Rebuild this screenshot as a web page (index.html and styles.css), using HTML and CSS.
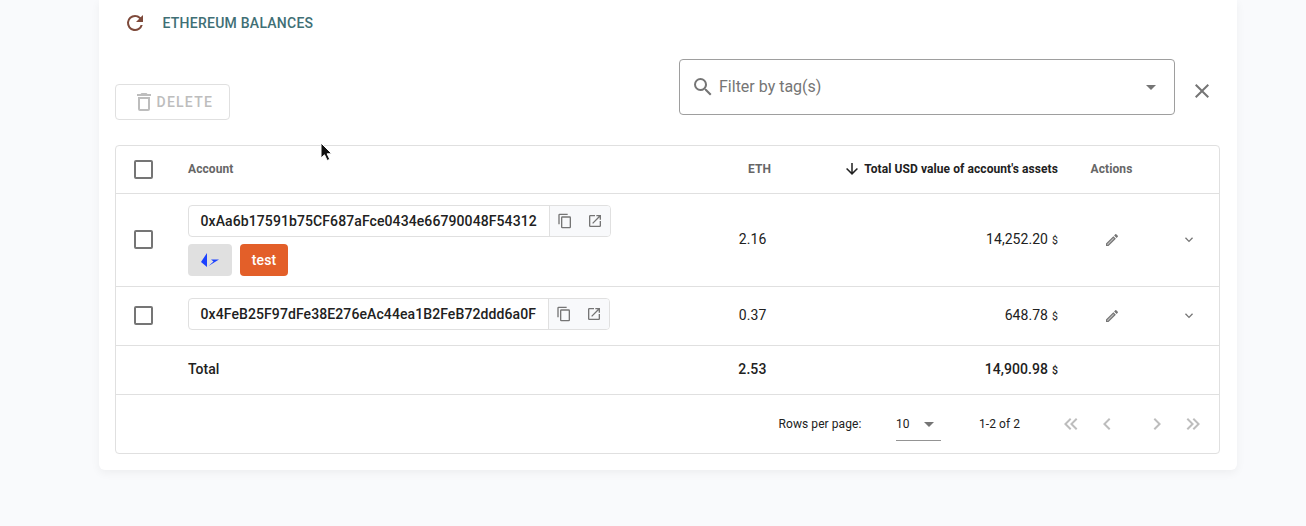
FILE: index.html
```html
<!DOCTYPE html>
<html lang="en">
<head>
<meta charset="utf-8">
<title>Ethereum Balances</title>
<link rel="stylesheet" href="styles.css">
</head>
<body>
<main class="card">
  <header class="title">
    <svg class="icon refresh" width="24" height="24" viewBox="0 0 24 24"><path d="M17.65 6.35A7.96 7.96 0 0 0 12 4a8 8 0 1 0 7.73 10h-2.08A6 6 0 1 1 12 6c1.66 0 3.14.69 4.22 1.78L13 11h7V4z"/></svg>
    <h1 class="heading">ETHEREUM BALANCES</h1>
  </header>
  <div class="toolbar">
    <button class="delete">
      <svg class="icon" width="24" height="24" viewBox="0 0 24 24"><path d="M6 19a2 2 0 0 0 2 2h8a2 2 0 0 0 2-2V7H6v12M8 9h8v10H8V9m7.5-5-1-1h-5l-1 1H5v2h14V4h-3.500z"/></svg>
      <span class="delete-label">DELETE</span>
    </button>
    <div class="filter">
      <svg class="icon gray" width="24" height="24" viewBox="0 0 24 24"><path d="M9.500 3A6.500 6.500 0 0 1 16 9.500c0 1.610-.59 3.090-1.560 4.230l.27.27h.79l5 5-1.500 1.500-5-5v-.79l-.27-.27A6.516 6.516 0 0 1 9.500 16a6.500 6.500 0 0 1 0-13m0 2a4.500 4.500 0 1 0 0 9 4.500 4.500 0 0 0 0-9z"/></svg>
      <span class="filter-text">Filter by tag(s)</span>
      <svg class="icon gray" width="24" height="24" viewBox="0 0 24 24"><path d="M7 10l5 5 5-5z"/></svg>
    </div>
    <svg class="icon gray close" width="24" height="24" viewBox="0 0 24 24"><path d="M19 6.410 17.590 5 12 10.590 6.410 5 5 6.410 10.590 12 5 17.590 6.410 19 12 13.410 17.590 19 19 17.590 13.410 12z"/></svg>
  </div>
  <section class="table">
    <div class="row head">
      <span class="check"></span>
      <span>Account</span>
      <span class="num">ETH</span>
      <span class="sorted"><svg class="icon" width="18" height="18" viewBox="0 0 24 24"><path d="M11 4h2v12l5.500-5.500 1.420 1.420L12 19.840l-7.920-7.920L5.500 10.500 11 16V4z"/></svg><span class="sorted-text">Total USD value of account's assets</span></span>
      <span class="center">Actions</span>
    </div>
    <div class="row first">
      <span class="check"></span>
      <div class="account">
        <div class="address"><span class="hash">0xAa6b17591b75CF687aFce0434e66790048F54312</span><span class="tools">
          <svg class="icon" width="16" height="16" viewBox="0 0 24 24"><path d="M19 21H8V7h11m0-2H8a2 2 0 0 0-2 2v14a2 2 0 0 0 2 2h11a2 2 0 0 0 2-2V7a2 2 0 0 0-2-2m-3-4H4a2 2 0 0 0-2 2v14h2V3h12V1z"/></svg>
          <svg class="icon" width="16" height="16" viewBox="0 0 24 24"><path d="M14 3v2h3.590l-9.830 9.830 1.410 1.410L19 6.410V10h2V3m-2 16H5V5h7V3H5a2 2 0 0 0-2 2v14a2 2 0 0 0 2 2h14a2 2 0 0 0 2-2v-7h-2v7z"/></svg>
        </span></div>
        <div class="tags">
          <span class="tag loop"><svg width="20" height="16" viewBox="0 0 20 16"><path fill="#1c42ff" d="M7 1v14L1 10zM11 7.500h8L8.500 14l5-4.500z"/></svg></span>
          <span class="tag test">test</span>
        </div>
      </div>
      <span class="num">2.16</span>
      <span class="usd">14,252.20<small>$</small></span>
      <span class="center"><svg class="icon gray" width="16" height="16" viewBox="0 0 24 24"><path class="pencil-fill" d="M5 19v-1.500L14.500 8.500l1.500 1.500L6.500 19z"/><path d="M14.060 9l.94.94L5.920 19H5v-.92L14.060 9m3.600-6c-.25 0-.51.1-.7.290l-1.830 1.830 3.750 3.750 1.830-1.830c.39-.39.39-1.040 0-1.410l-2.340-2.340c-.2-.2-.45-.29-.71-.29m-3.600 3.190L3 17.250V21h3.750L17.810 9.940l-3.750-3.750z"/></svg></span>
      <span class="center"><svg class="icon gray" width="16" height="16" viewBox="0 0 24 24"><path d="M7.410 8 12 12.600 16.590 8 18 9.400l-6 6-6-6z"/></svg></span>
    </div>
    <div class="row second">
      <span class="check"></span>
      <div class="account">
        <div class="address"><span class="hash hash-alt">0x4FeB25F97dFe38E276eAc44ea1B2FeB72ddd6a0F</span><span class="tools">
          <svg class="icon" width="16" height="16" viewBox="0 0 24 24"><path d="M19 21H8V7h11m0-2H8a2 2 0 0 0-2 2v14a2 2 0 0 0 2 2h11a2 2 0 0 0 2-2V7a2 2 0 0 0-2-2m-3-4H4a2 2 0 0 0-2 2v14h2V3h12V1z"/></svg>
          <svg class="icon" width="16" height="16" viewBox="0 0 24 24"><path d="M14 3v2h3.590l-9.830 9.830 1.410 1.410L19 6.410V10h2V3m-2 16H5V5h7V3H5a2 2 0 0 0-2 2v14a2 2 0 0 0 2 2h14a2 2 0 0 0 2-2v-7h-2v7z"/></svg>
        </span></div>
      </div>
      <span class="num">0.37</span>
      <span class="usd">648.78<small>$</small></span>
      <span class="center"><svg class="icon gray" width="16" height="16" viewBox="0 0 24 24"><path class="pencil-fill" d="M5 19v-1.500L14.500 8.500l1.500 1.500L6.500 19z"/><path d="M14.060 9l.94.94L5.920 19H5v-.92L14.060 9m3.600-6c-.25 0-.51.1-.7.290l-1.830 1.830 3.750 3.750 1.830-1.830c.39-.39.39-1.040 0-1.410l-2.340-2.340c-.2-.2-.45-.29-.71-.29m-3.600 3.190L3 17.250V21h3.750L17.810 9.940l-3.750-3.750z"/></svg></span>
      <span class="center"><svg class="icon gray" width="16" height="16" viewBox="0 0 24 24"><path d="M7.410 8 12 12.600 16.590 8 18 9.400l-6 6-6-6z"/></svg></span>
    </div>
    <div class="row total">
      <span></span>
      <span>Total</span>
      <span class="num">2.53</span>
      <span class="usd">14,900.98<small>$</small></span>
    </div>
    <footer class="pager">
      <span class="rows-label">Rows per page:</span>
      <span class="select">10<svg class="icon gray" width="24" height="24" viewBox="0 0 24 24"><path d="M7 10l5 5 5-5z"/></svg></span>
      <span class="range">1-2 of 2</span>
      <nav class="pages">
        <svg class="icon" width="24" height="24" viewBox="0 0 24 24"><path d="M18.410 7.410 17 6l-6 6 6 6 1.410-1.410L13.830 12l4.580-4.590m-6 0L11 6l-6 6 6 6 1.410-1.410L7.830 12l4.580-4.590z"/></svg>
        <svg class="icon" width="24" height="24" viewBox="0 0 24 24"><path d="M15.410 16.580 10.830 12l4.580-4.590L14 6l-6 6 6 6z"/></svg>
        <svg class="icon next" width="24" height="24" viewBox="0 0 24 24"><path d="M8.590 16.580 13.170 12 8.590 7.410 10 6l6 6-6 6z"/></svg>
        <svg class="icon" width="24" height="24" viewBox="0 0 24 24"><path d="M5.590 7.410 7 6l6 6-6 6-1.410-1.410L10.170 12 5.590 7.410m6 0L13 6l6 6-6 6-1.410-1.410L16.170 12l-4.580-4.590z"/></svg>
      </nav>
    </footer>
  </section>
</main>
<svg class="cursor" width="14" height="21" viewBox="0 0 14 21"><path d="M1 1v15l3.500-3.200 2.700 5.700 2.600-1.200-2.700-5.500h4.700z" fill="#111" stroke="#fff"/></svg>
</body>
</html>
```

FILE: styles.css
```css
* { box-sizing: border-box; }

body {
  margin: 0;
  height: 526px;
  overflow: hidden;
  background: #f9fafc;
  font-family: Roboto, sans-serif;
  color: #212121;
}

.card {
  width: 1138px;
  height: 470px;
  margin-left: 99px;
  padding: 11px 17px 0 16px;
  background: #fff;
  border-radius: 0 0 6px 6px;
  box-shadow: 0 3px 10px rgba(0, 0, 0, .05);
}

.icon { display: block; flex: none; fill: currentColor; }
.gray { color: #757575; }
.pencil-fill { fill-opacity: .45; }

.title { display: flex; align-items: center; height: 24px; padding-left: 7.5px; }
.refresh { color: #7e4a3b; }
.heading {
  margin: 0 0 0 16px;
  font-size: 14px;
  font-weight: 500;
  letter-spacing: .25px;
  color: #3f6f75;
}

.toolbar { display: flex; height: 110px; }
.delete {
  display: flex;
  align-items: center;
  width: 115px;
  height: 36px;
  margin-top: 49px;
  padding: 0 0 0 15.5px;
  border: 1px solid #e0e0e0;
  border-radius: 4px;
  background: transparent;
  color: #bdbdbd;
  font: 500 14px Roboto, sans-serif;
  letter-spacing: 1.25px;
}
.delete-label { margin-left: 1px; }
.filter {
  display: flex;
  align-items: center;
  width: 496px;
  height: 56px;
  margin: 24px 0 0 449px;
  padding: 0 11.5px 0 11px;
  border: 1px solid #9e9e9e;
  border-radius: 4px;
}
.filter-text { flex: 1; margin-left: 4px; padding-bottom: 2px; font-size: 16px; color: #757575; }
.close { margin: 44px 0 0 14.5px; }

.table { border: 1px solid #e0e0e0; border-radius: 4px; height: 309px; }
.row {
  display: grid;
  grid-template-columns: 72px 443px 140px 287px 107px 48px;
  align-items: center;
  border-bottom: 1px solid #e0e0e0;
  font-size: 14px;
}
.head { height: 48px; padding-bottom: 1px; font-size: 12px; font-weight: 700; letter-spacing: .08px; color: #666; }
.first { height: 93px; }
.second { height: 59px; }
.total { height: 49px; padding-bottom: 2px; font-weight: 500; }
.check {
  width: 19px;
  height: 19px;
  margin-left: 18px;
  border: 2px solid #757575;
  border-radius: 2px;
}
.first .check, .second .check { margin-bottom: 1px; }
.head > span:not(.check) { padding-bottom: 1px; }
.num { text-align: right; }
.row:not(.head) .num { padding-right: 4.5px; letter-spacing: .1px; }
.sorted { display: flex; align-items: center; justify-content: flex-end; gap: 3px; color: #212121; }
.center { display: flex; justify-content: center; }
.usd { text-align: right; letter-spacing: .05px; }
.first .num, .first .usd, .second .num, .second .usd { padding-bottom: 2px; }
.usd small { margin-left: 4px; font-size: 10.5px; }

.address {
  display: flex;
  width: max-content;
  height: 32px;
  border: 1px solid #e0e0e0;
  border-radius: 4px;
  overflow: hidden;
}
.second .address { margin-bottom: 4px; }
.hash { width: 360px; padding-left: 11.5px; line-height: 30px; font-weight: 500; letter-spacing: .095px; }
.hash-alt { width: 359px; }
.tools {
  display: flex;
  align-items: center;
  gap: 14px;
  width: 61px;
  padding-left: 7px;
  border-left: 1px solid #e0e0e0;
  background: #f8f9fb;
  color: #757575;
}
.tags { display: flex; gap: 8px; margin-top: 7px; }
.tag {
  display: flex;
  align-items: center;
  justify-content: center;
  height: 32px;
  border-radius: 4px;
}
.loop { width: 44px; background: #e0e0e0; }
.test { width: 48px; background: #e35f29; color: #fff; font-weight: 500; letter-spacing: .1px; }

.pager { display: flex; align-items: center; height: 58px; padding-left: 662.5px; font-size: 12px; letter-spacing: .08px; }
.rows-label { width: 117.5px; }
.select {
  display: flex;
  align-items: center;
  justify-content: space-between;
  width: 45px;
  height: 33px;
  border-bottom: 1px solid #949494;
}
.range { margin-left: 38px; width: 79.5px; }
.pages { display: flex; gap: 12px; color: #bdbdbd; }
.next { margin-left: 14px; }

.cursor { position: absolute; left: 320px; top: 142px; }
```
